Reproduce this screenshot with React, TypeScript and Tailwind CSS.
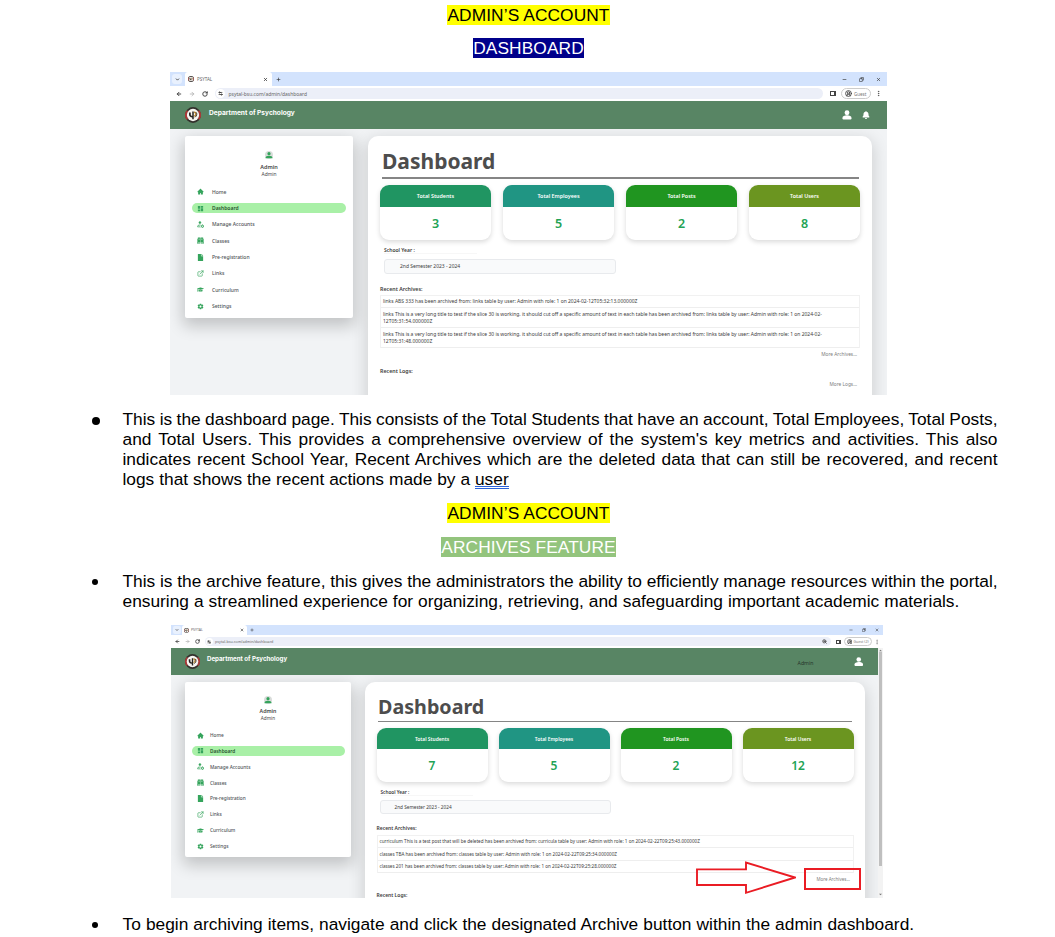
import React from "react";
import { AiFillHome } from "react-icons/ai";
import { MdDashboard } from "react-icons/md";
import { FaFile, FaBell, FaGraduationCap } from "react-icons/fa";
import { IoMdSettings } from "react-icons/io";
import {
  ArrowLeft,
  ArrowRight,
  RotateCw,
  ChevronDown,
  X,
  Plus,
  Minus,
  Copy,
  EllipsisVertical,
  CircleUserRound,
  ExternalLink,
  Settings2,
  ZoomIn,
} from "lucide-react";

type Size = "a" | "b";

const BookIcon = ({ className }: { className: string }) => (
  <svg viewBox="0 0 24 24" className={className} fill="currentColor">
    <path d="M3 2h7.200c.8 0 1.300.4 1.300 1v15.500H3zM21 2h-7.200c-.8 0-1.300.4-1.300 1v15.500H21z" />
    <path d="M0 6h2v14h9v2H0zM24 6h-2v14h-9v2h11z" />
    <path d="M5.500 6h3.500v1.300H5.500zM5.500 9h3.500v1.300H5.500zM15 6h3.500v1.300H15zM15 9h3.500v1.300H15z" fill="#fff" />
  </svg>
);

const UserGearIcon = ({ className }: { className: string }) => (
  <svg viewBox="0 0 24 24" className={className} fill="none" stroke="currentColor">
    <circle cx="10" cy="5.500" r="3.600" fill="currentColor" strokeWidth="1.500" />
    <path d="M12 14H7c-3 0-5 2-5 4.500V20h9" strokeWidth="2.600" />
    <circle cx="18.500" cy="18" r="3.600" strokeWidth="3.200" />
    <path d="M18.500 11.500v2.500M18.500 22v2M12.500 14.500l2 1.500M24 14.500l-2 1.500M12.500 21.500l2-1.500M24 21.500l-2-1.500" strokeWidth="2" />
  </svg>
);

const LinkIcon = ({ className }: { className: string }) => <ExternalLink className={className} strokeWidth={2.2} />;

const Seal = ({ className }: { className: string }) => (
  <svg viewBox="0 0 32 32" className={className}>
    <circle cx="16" cy="16" r="15.800" fill="#33302c" />
    <path d="M5 7.500A14 14 0 0 0 5 24.500M27 7.500A14 14 0 0 1 27 24.500" fill="none" stroke="#a93a38" strokeWidth="4" />
    <circle cx="16" cy="16" r="12.300" fill="#f8f6f2" />
    <path d="M8 11h3.500v4c0 1.500 1 2.500 3 3V9h3v15.500h-3V21c-4-.5-6.500-2.500-6.500-6z" fill="#26231f" />
    <path d="M18 9c6-1 7.500 9 0 10.500v-2.500c3-1 3-5 0-5z" fill="#b98a35" />
    <path d="M22 10.500c2.500 2 2 7.500-2 10" fill="none" stroke="#26231f" strokeWidth="1.800" />
  </svg>
);

const Person = ({ className }: { className: string }) => (
  <svg viewBox="0 0 24 24" className={className} fill="currentColor">
    <ellipse cx="12" cy="6.500" rx="5.800" ry="5.800" />
    <path d="M1 19.500c0-5 5-7 11-7s11 2 11 7c0 2.500-1.500 3.500-4 3.500H5c-2.500 0-4-1-4-3.500z" />
  </svg>
);

const Avatar = ({ className }: { className: string }) => (
  <svg viewBox="0 0 24 24" className={className}>
    <circle cx="12" cy="12" r="12" fill="#d9dcda" />
    <circle cx="12" cy="8" r="4.800" fill="#34a35b" />
    <path d="M1.500 20c0-4 4-6 10.500-6s10.500 2 10.500 6v2h-21z" fill="#34a35b" />
  </svg>
);

const navItems = [
  { label: "Home", icon: AiFillHome },
  { label: "Dashboard", icon: MdDashboard },
  { label: "Manage Accounts", icon: UserGearIcon },
  { label: "Classes", icon: BookIcon },
  { label: "Pre-registration", icon: FaFile },
  { label: "Links", icon: LinkIcon },
  { label: "Curriculum", icon: FaGraduationCap },
  { label: "Settings", icon: IoMdSettings },
];

const styles = {
  a: {
    item: "h-[16.350px]",
    pill: "h-[9.800px] w-[154px]",
    icon: "ml-[5px] size-[7px]",
    label: "ml-[8px] text-[5px]",
    sidebar: "mt-[7px] ml-[15px] h-[182px] w-[168px] pl-[7px]",
    avatar: "mt-[15px] size-[8px]",
    name: "mt-[4.500px] text-[5.500px]",
    role: "text-[4.900px]",
    nav: "mt-[5.600px]",
    main: "mt-[7px] ml-[15px] w-[504px] px-[12px]",
    title: "mt-[10px] ml-[2px] h-[30px] text-[21px] leading-[30px]",
    rule: "mt-[1px] ml-[2px] mr-[1px]",
    cards: "mt-[6px] grid-cols-[111px_111px_111px_111px] gap-x-[12px]",
    card: "h-[55px]",
    head: "h-[22px] text-[5.350px]",
    value: "h-[33px] pt-[1px] text-[12.500px]",
    year: "mt-[6.500px] ml-[4px] h-[8px] w-[93px] text-[5px] leading-[8px]",
    select: "mt-[5px] ml-[4px] h-[14.500px] w-[232px] pl-[15px] text-[4.950px]",
    section: "mt-[11px] h-[9px] text-[5.300px] leading-[9px]",
    table: "mt-[1px] w-[480px]",
    row: "py-[2.500px] text-[4.960px] leading-[6.900px]",
  },
  b: {
    item: "h-[15.850px]",
    pill: "h-[9.500px] w-[152.500px]",
    icon: "ml-[4.500px] size-[7px]",
    label: "ml-[6.500px] text-[4.750px]",
    sidebar: "mt-[7.500px] ml-[14px] h-[175px] w-[166px] pl-[7px]",
    avatar: "mt-[14px] size-[8px]",
    name: "mt-[3.500px] text-[5.300px]",
    role: "text-[4.700px]",
    nav: "mt-[5.200px]",
    main: "mt-[7.500px] ml-[14px] w-[500px] px-[11.500px]",
    title: "mt-[9.500px] ml-[1.500px] h-[29px] text-[19.700px] leading-[29px]",
    rule: "mt-0 ml-[1.500px] mr-[1.500px]",
    cards: "mt-[6px] grid-cols-[111px_111px_111px_111px] gap-x-[11px]",
    card: "h-[53.500px]",
    head: "h-[21px] text-[4.900px]",
    value: "h-[32.500px] pt-[2px] text-[12px]",
    year: "mt-[6px] ml-[4px] h-[8px] w-[92px] text-[4.700px] leading-[8px]",
    select: "mt-[4.500px] ml-[3.500px] h-[14px] w-[231px] pl-[13.500px] text-[4.700px]",
    section: "mt-[10px] h-[9px] text-[5px] leading-[9px]",
    table: "mt-[2px] w-[477px]",
    row: "py-[2.400px] text-[4.600px] leading-[6.600px]",
  },
};

function Sidebar({ v }: { v: Size }) {
  const s = styles[v];
  return (
    <aside className={`${s.sidebar} shrink-0 rounded-[2px] bg-white shadow-[0_6px_16px_2px_rgba(0,0,0,0.2)]`}>
      <div className="flex flex-col items-center pr-[7px]">
        <Avatar className={s.avatar} />
        <div className={`${s.name} leading-[7.500px] font-semibold text-[#444]`}>Admin</div>
        <div className={`${s.role} leading-[7px] text-[#444]`}>Admin</div>
      </div>
      <nav className={s.nav}>
        {navItems.map(({ label, icon: Icon }, i) => (
          <div key={label} className={`${s.item} flex items-center`}>
            <div className={`${s.pill} flex items-center rounded-full text-[#35a45c] ${i === 1 ? "bg-[#a9f0a7]" : ""}`}>
              <Icon className={`${s.icon} shrink-0`} />
              <span className={`${s.label} whitespace-nowrap ${i === 1 ? "font-semibold text-[#24502c]" : "font-medium text-[#4f5357]"}`}>
                {label}
              </span>
            </div>
          </div>
        ))}
      </nav>
    </aside>
  );
}

const cardColors = ["bg-[#209562]", "bg-[#209583]", "bg-[#209520]", "bg-[#6b9520]"];
const cardNames = ["Total Students", "Total Employees", "Total Posts", "Total Users"];

function Main({ v, values, rows }: { v: Size; values: number[]; rows: string[][] }) {
  const s = styles[v];
  return (
    <main className={`${s.main} h-[300px] shrink-0 rounded-[10px] bg-white text-[#3c3c3c] shadow-[0_5px_16px_2px_rgba(0,0,0,0.14)]`}>
      <h1 className={`${s.title} font-bold text-[#4d4d4d]`}>Dashboard</h1>
      <div className={`${s.rule} h-[1.500px] bg-[#858585]`} />
      <div className={`${s.cards} grid`}>
        {cardNames.map((name, i) => (
          <div key={name} className={`${s.card} overflow-hidden rounded-[9px] bg-white shadow-[0_2px_5px_rgba(0,0,0,0.15)]`}>
            <div className={`${s.head} ${cardColors[i]} flex items-center justify-center font-semibold text-white`}>{name}</div>
            <div className={`${s.value} flex items-center justify-center font-semibold text-[#22a355]`}>{values[i]}</div>
          </div>
        ))}
      </div>
      <div className={`${s.year} border-b border-[#f7f7f7] font-semibold`}>School Year :</div>
      <div className={`${s.select} flex items-center rounded-[3px] border border-[#e8eaed] bg-[#f9fafb]`}>
        2nd Semester 2023 - 2024
      </div>
      <div className={`${s.section} font-semibold`}>Recent Archives:</div>
      <div className={`${s.table} border border-b-0 border-[#f1f1f1]`}>
        {rows.map((lines, i) => (
          <div key={i} className={`${s.row} border-b border-[#eeeeee] pl-[2px] whitespace-nowrap`}>
            {lines.map((l) => (
              <div key={l}>{l}</div>
            ))}
          </div>
        ))}
      </div>
      {v === "a" ? (
        <>
          <div className="mt-[2px] h-[8px] pr-[3px] text-right text-[4.800px] leading-[8px] text-[#7d7d7d]">More Archives...</div>
          <div className="mt-[9px] h-[9px] text-[5.300px] leading-[9px] font-semibold">Recent Logs:</div>
          <div className="mt-[4px] h-[8px] pr-[3px] text-right text-[4.800px] leading-[8px] text-[#7d7d7d]">More Logs...</div>
        </>
      ) : (
        <>
          <div className="mt-[1.500px] h-[8px] pr-[3.500px] text-right text-[4.500px] leading-[8px] text-[#7d7d7d]">More Archives...</div>
          <div className="mt-[9px] h-[7px] text-[5px] leading-[7px] font-semibold">Recent Logs:</div>
        </>
      )}
    </main>
  );
}

const rowsA = [
  ["links ABS 333 has been archived from: links table by user: Admin with role: 1 on 2024-02-12T05:32:13.000000Z"],
  [
    "links This is a very long title to test if the slice 30 is working. it should cut off a specific amount of text in each table has been archived from: links table by user: Admin with role: 1 on 2024-02-",
    "12T05:31:54.000000Z",
  ],
  [
    "links This is a very long title to test if the slice 30 is working. it should cut off a specific amount of text in each table has been archived from: links table by user: Admin with role: 1 on 2024-02-",
    "12T05:31:48.000000Z",
  ],
];

const rowsB = [
  ["curriculum This is a test post that will be deleted has been archived from: curricula table by user: Admin with role: 1 on 2024-02-22T09:25:43.000000Z"],
  ["classes TBA has been archived from: classes table by user: Admin with role: 1 on 2024-02-22T09:25:34.000000Z"],
  ["classes 201 has been archived from: classes table by user: Admin with role: 1 on 2024-02-22T09:25:28.000000Z"],
];

function ShotA() {
  return (
    <section className="ml-[170px] flex h-[323px] w-[717px] flex-col overflow-hidden bg-[#f1f3f5] font-['Noto_Sans',sans-serif] text-[#333]">
      <div className="flex h-[14px] shrink-0 items-center bg-[#d3e3fd]">
        <div className="ml-[2px] flex size-[10px] items-center justify-center rounded-[3px] bg-[#e9f1fe]">
          <ChevronDown className="size-[5px]" strokeWidth={4} />
        </div>
        <div className="ml-[3px] flex h-[14px] w-[87px] items-center rounded-t-[3px] bg-white pr-[4px] pl-[3px]">
          <Seal className="size-[6px]" />
          <span className="ml-[3px] text-[4.500px] text-[#666]">PSYTAL</span>
          <X className="ml-auto size-[5px]" strokeWidth={3.5} />
        </div>
        <Plus className="ml-[4px] size-[5px]" strokeWidth={3} />
        <div className="mr-[6px] ml-auto flex items-center gap-[12px]">
          <Minus className="size-[5px]" strokeWidth={3} />
          <Copy className="size-[5px] -scale-x-100" strokeWidth={3} />
          <X className="size-[5px]" strokeWidth={3} />
        </div>
      </div>
      <div className="flex h-[15px] shrink-0 items-center bg-white">
        <ArrowLeft className="ml-[5.500px] size-[6px]" strokeWidth={3.5} />
        <ArrowRight className="ml-[7.500px] size-[6px] text-[#aaa]" strokeWidth={3} />
        <RotateCw className="ml-[7px] size-[6px]" strokeWidth={3.5} />
        <div className="ml-[7px] flex h-[11px] w-[608px] items-center rounded-full bg-[#eceff8]">
          <div className="ml-[1px] flex size-[9px] items-center justify-center rounded-full bg-white">
            <Settings2 className="size-[5px]" strokeWidth={3.5} />
          </div>
          <span className="ml-[3.500px] text-[4.950px] text-[#666]">psytal-bsu.com/admin/dashboard</span>
        </div>
        <div className="ml-[7px] h-[5px] w-[6px] border border-r-[2.500px] border-[#444]" />
        <div className="ml-[5px] flex h-[11px] w-[30px] items-center rounded-full border border-[#ccc] pl-[3px] text-[4.500px] text-[#777]">
          <CircleUserRound className="mr-[2px] size-[7px] text-[#444]" strokeWidth={3} />
          Guest
        </div>
        <EllipsisVertical className="ml-[4px] size-[7px]" strokeWidth={2} />
      </div>
      <header className="flex h-[28px] shrink-0 items-center bg-[#588564] text-white">
        <Seal className="ml-[15px] size-[16px]" />
        <span className="mb-[5px] ml-[8px] font-['Inter',sans-serif] text-[6.580px] font-bold whitespace-nowrap">Department of Psychology</span>
        <Person className="mr-[10px] ml-auto size-[10px]" />
        <FaBell className="mr-[17.500px] size-[8px]" />
      </header>
      <div className="flex min-h-0 flex-1 items-start overflow-hidden">
        <Sidebar v="a" />
        <Main v="a" values={[3, 5, 2, 8]} rows={rowsA} />
      </div>
    </section>
  );
}

function ShotB() {
  return (
    <section className="relative ml-[171px] flex h-[273px] w-[712px] flex-col overflow-hidden bg-[#f1f3f5] font-['Noto_Sans',sans-serif] text-[#333]">
      <div className="flex h-[10px] shrink-0 items-center bg-[#d3e3fd]">
        <div className="ml-[2px] flex size-[8px] items-center justify-center rounded-[2px] bg-[#e9f1fe]">
          <ChevronDown className="size-[4px]" strokeWidth={4} />
        </div>
        <div className="ml-[1px] flex h-[10px] w-[65px] items-center rounded-t-[3px] bg-white pr-[3px] pl-[2px]">
          <Seal className="size-[5px]" />
          <span className="ml-[2px] text-[3.500px] text-[#666]">PSYTAL</span>
          <X className="ml-auto size-[4px]" strokeWidth={3.5} />
        </div>
        <Plus className="ml-[3px] size-[4px]" strokeWidth={3} />
        <div className="mr-[4px] ml-auto flex items-center gap-[9px]">
          <Minus className="size-[4px]" strokeWidth={3} />
          <Copy className="size-[4px] -scale-x-100" strokeWidth={3} />
          <X className="size-[4px]" strokeWidth={3} />
        </div>
      </div>
      <div className="flex h-[13px] shrink-0 items-center bg-white">
        <ArrowLeft className="ml-[3.500px] size-[5px]" strokeWidth={3.5} />
        <ArrowRight className="ml-[5px] size-[5px] text-[#aaa]" strokeWidth={3} />
        <RotateCw className="ml-[5px] size-[5px]" strokeWidth={3.5} />
        <div className="ml-[5px] flex h-[9px] w-[626px] items-center rounded-full bg-[#eceff8]">
          <div className="ml-[1px] flex size-[7px] items-center justify-center rounded-full bg-white">
            <Settings2 className="size-[4px]" strokeWidth={3.5} />
          </div>
          <span className="ml-[2.500px] text-[3.680px] text-[#666]">psytal-bsu.com/admin/dashboard</span>
          <ZoomIn className="mr-[4px] ml-auto size-[5px]" strokeWidth={3} />
        </div>
        <div className="ml-[5px] h-[4px] w-[5px] border border-r-2 border-[#444]" />
        <div className="ml-[3px] flex h-[9px] w-[28px] items-center rounded-full border border-[#ccc] pl-[2px] text-[3.600px] whitespace-nowrap text-[#777]">
          <CircleUserRound className="mr-[1.500px] size-[5.500px] shrink-0 text-[#444]" strokeWidth={3} />
          Guest (2)
        </div>
        <EllipsisVertical className="ml-[2px] size-[6px] text-[#777]" strokeWidth={2} />
      </div>
      <div className="flex min-h-0 flex-1">
        <div className="flex w-[707px] flex-col overflow-hidden">
          <header className="flex h-[26.500px] shrink-0 items-center bg-[#588564] text-white">
            <Seal className="ml-[14px] size-[15px]" />
            <span className="mb-[4px] ml-[7px] font-['Inter',sans-serif] text-[6.150px] font-bold whitespace-nowrap">Department of Psychology</span>
            <span className="mt-[3px] mr-[40px] ml-auto text-[5.200px] text-[#26352b]">Admin</span>
            <Person className="mr-[15px] size-[9.500px]" />
          </header>
          <div className="flex min-h-0 flex-1 items-start overflow-hidden">
            <Sidebar v="b" />
            <Main v="b" values={[7, 5, 2, 12]} rows={rowsB} />
          </div>
        </div>
        <div className="flex w-[5px] flex-col items-center bg-[#f3f3f3] text-[#777]">
          <svg viewBox="0 0 4 4" className="mt-[1px] size-[3px]" fill="currentColor"><path d="M2 1l2 2H0z" /></svg>
          <div className="h-[214px] w-[3px] bg-[#bfbfbf]" />
          <svg viewBox="0 0 4 4" className="mt-auto mb-[2px] size-[3px]" fill="currentColor"><path d="M2 3L0 1h4z" /></svg>
        </div>
      </div>
      <svg viewBox="0 0 100 34" className="absolute top-[236px] left-[525px] h-[34px] w-[100px]">
        <path d="M1 8.400H50V1.500L99 16.500L50 31.800V24H1z" fill="none" stroke="#ea1c24" strokeWidth="1.900" />
      </svg>
      <div className="absolute top-[243px] left-[632.500px] h-[22px] w-[57.500px] border-2 border-[#ea1c24]" />
    </section>
  );
}

const Line = ({ children, className = "" }: { children: React.ReactNode; className?: string }) => (
  <div className={`h-[20px] whitespace-nowrap ${className}`}>{children}</div>
);

export default function App() {
  return (
    <div className="h-[937px] w-[1055px] overflow-hidden bg-white font-['Liberation_Sans',sans-serif] text-[17.330px] leading-[20px] text-black">
      <div className="flex h-[72px] w-[1057px] flex-col items-center pt-[5px] tracking-[0.090px]">
        <div className="h-[20px] bg-[#ffff00]">ADMIN’S ACCOUNT</div>
        <div className="mt-[13px] h-[20px] bg-[#00008b] text-white">DASHBOARD</div>
      </div>
      <ShotA />
      <div className="mt-[14px] flex">
        <div className="mt-[8px] ml-[92px] size-[8px] rounded-full bg-black" />
        <div className="ml-[22.500px] w-[875px]">
          <Line className="[word-spacing:-0.390px]">This is the dashboard page. This consists of the Total Students that have an account, Total Employees, Total Posts,</Line>
          <Line className="[text-align-last:justify]">and Total Users. This provides a comprehensive overview of the system's key metrics and activities. This also</Line>
          <Line className="[text-align-last:justify]">indicates recent School Year, Recent Archives which are the deleted data that can still be recovered, and recent</Line>
          <Line className="[word-spacing:0.100px]">
            logs that shows the recent actions made by a{" "}
            <span className="inline-block border-b-[3px] border-double border-[#2b62d9] leading-[14px]">user</span>
          </Line>
        </div>
      </div>
      <div className="mt-[14px] flex w-[1057px] flex-col items-center tracking-[0.090px]">
        <div className="h-[20px] bg-[#ffff00]">ADMIN’S ACCOUNT</div>
        <div className="mt-[14px] h-[20px] bg-[#93c47d] text-white">ARCHIVES FEATURE</div>
      </div>
      <div className="mt-[14px] flex h-[54px]">
        <div className="mt-[8px] ml-[92px] size-[6px] rounded-full bg-black" />
        <div className="ml-[24.500px] w-[875px]">
          <Line className="[word-spacing:-0.060px]">This is the archive feature, this gives the administrators the ability to efficiently manage resources within the portal,</Line>
          <Line className="[word-spacing:0.160px]">ensuring a streamlined experience for organizing, retrieving, and safeguarding important academic materials.</Line>
        </div>
      </div>
      <ShotB />
      <div className="mt-[16px] flex">
        <div className="mt-[8px] ml-[92px] size-[6px] rounded-full bg-black" />
        <div className="ml-[24.500px]">
          <Line className="[word-spacing:0.260px]">To begin archiving items, navigate and click the designated Archive button within the admin dashboard.</Line>
        </div>
      </div>
    </div>
  );
}
